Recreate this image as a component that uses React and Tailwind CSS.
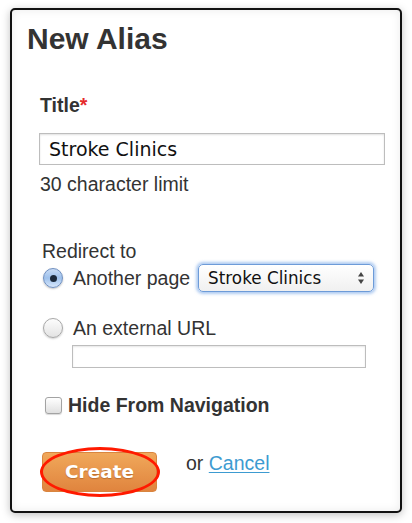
import React from 'react';

const Radio = ({ checked }) =>
  checked ? (
    <span className="flex h-[20px] w-[20px] shrink-0 items-center justify-center rounded-full border border-[#6f8fc0] bg-gradient-to-b from-[#c9dcf5] via-[#9ec1ec] to-[#d7e7fb] shadow-[0_1px_2px_rgba(0,0,0,0.25)]">
      <span className="h-[7px] w-[7px] rounded-full bg-[#1c2a3c]" />
    </span>
  ) : (
    <span className="block h-[20px] w-[20px] shrink-0 rounded-full border border-[#a8a8a8] bg-gradient-to-b from-[#fdfdfd] to-[#e3e3e3] shadow-[0_1px_2px_rgba(0,0,0,0.2)]" />
  );

const App = () => {
  return (
    <div className="h-[523px] w-[412px] bg-white pt-[8px] pl-[10px] font-['Liberation_Sans',Arial,sans-serif] text-[#333]">
      <div className="flex h-[505px] w-[392px] flex-col rounded-[5px] border-2 border-[#111] bg-white shadow-[0_2px_8px_rgba(0,0,0,0.25),inset_0_0_10px_rgba(0,0,0,0.08)]">
        <h1 className="mt-[12px] ml-[15px] text-[30px] font-bold leading-[34px] text-[#333]">New Alias</h1>

        <div className="mt-[38px] ml-[28px] text-[19.5px] font-bold leading-[22px]">
          Title<span className="text-[#e52b2b]">*</span>
        </div>
        <div className="mt-[17px] ml-[27px] flex h-[32px] w-[346px] items-center border border-[#bdbdbd] bg-white pl-[9px] shadow-[inset_0_1px_2px_rgba(0,0,0,0.12)]">
          <span className="font-['DejaVu_Sans',sans-serif] text-[19px] leading-[22px] text-[#111]">Stroke Clinics</span>
        </div>
        <div className="mt-[8px] ml-[28px] text-[19.5px] leading-[22px]">30 character limit</div>

        <div className="mt-[45px] ml-[30px] text-[19.5px] leading-[22px]">Redirect to</div>
        <div className="mt-[2px] ml-[31px] flex items-center">
          <Radio checked />
          <span className="ml-[10px] text-[19.5px] leading-[22px]">Another page</span>
          <div className="ml-[8px] flex h-[28px] w-[176px] items-center justify-between rounded-[5px] border border-[#6d9bd8] bg-gradient-to-b from-white to-[#f0f0f0] pl-[9px] pr-[8px] shadow-[0_0_3px_2px_rgba(110,160,230,0.55)]">
            <span className="font-['DejaVu_Sans',sans-serif] text-[16.8px] leading-[20px] text-[#111]">Stroke Clinics</span>
            <svg width="8" height="14" viewBox="0 0 8 14">
              <path d="M4 1 L7 5.5 L1 5.5 Z" fill="#444" />
              <path d="M4 13 L7 8.5 L1 8.5 Z" fill="#444" />
            </svg>
          </div>
        </div>

        <div className="mt-[25px] ml-[31px] flex items-center">
          <Radio />
          <span className="ml-[10px] text-[19.5px] leading-[22px]">An external URL</span>
        </div>
        <div className="mt-[6px] ml-[60px] h-[23px] w-[294px] border border-[#bdbdbd] bg-white shadow-[inset_0_1px_2px_rgba(0,0,0,0.1)]" />

        <div className="mt-[26px] ml-[33px] flex items-center">
          <span className="block h-[17px] w-[17px] rounded-[3px] border border-[#a3a3a3] bg-gradient-to-b from-white to-[#e0e0e0] shadow-[0_1px_1px_rgba(0,0,0,0.15)]" />
          <span className="ml-[6px] text-[19.5px] font-bold leading-[22px]">Hide From Navigation</span>
        </div>

        <div className="mt-[36px] ml-[30px] flex items-start">
          <div className="relative">
            <button className="flex h-[40px] w-[115px] items-center justify-center rounded-[4px] border border-[#d9853f] bg-gradient-to-b from-[#f0a85a] to-[#e0843e] font-['DejaVu_Sans',sans-serif] text-[18.5px] font-bold text-white [text-shadow:0_1px_1px_rgba(120,60,10,0.4)]">
              Create
            </button>
            <span className="pointer-events-none absolute left-[-2px] top-[-5px] h-[50px] w-[120px] rounded-[50%] border-[3.5px] border-[#ff1a00]" />
          </div>
          <span className="ml-[29px] text-[19.5px] leading-[22px]">
            or{' '}
            <a href="#" className="text-[#3d9bd1] underline underline-offset-2">Cancel</a>
          </span>
        </div>
      </div>
    </div>
  );
};

export default App;
